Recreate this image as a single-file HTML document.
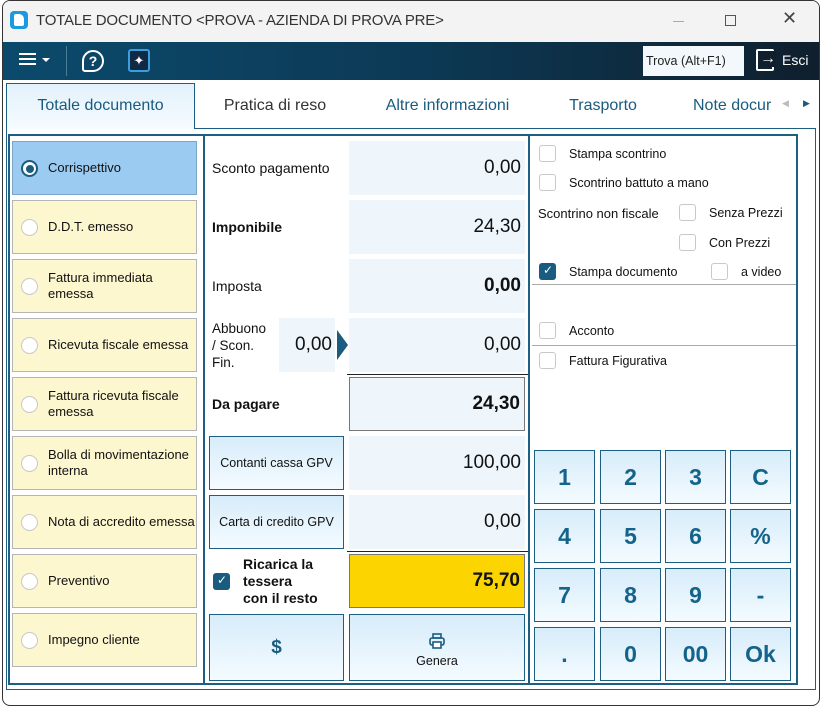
<!DOCTYPE html>
<html><head><meta charset="utf-8"><style>
*{box-sizing:border-box;margin:0;padding:0}
body{width:824px;height:708px;background:#fff;font-family:"Liberation Sans",Tahoma,sans-serif;position:relative;overflow:hidden;color:#111}
.a{position:absolute}
.win{left:2px;top:0;width:818px;height:706px;border:1px solid #333;border-radius:8px;background:#fff}
.title{left:3px;top:1px;width:816px;height:41px;background:#f3f3f3;border-radius:7px 7px 0 0}
.tb{left:3px;top:42px;width:816px;height:38px;background:linear-gradient(90deg,#0b4a6c 0%,#0c3a56 50%,#0f1f2d 100%)}
.tab{top:84px;height:44px;font-size:16px;line-height:44px;color:#1a5b80;text-align:center}
.frame{border:1px solid #1d5f82}
.li{left:12px;width:185px;height:54px;background:#fdf7cf;border:1px solid #b5b5b5;font-size:13px;color:#111}
.li .r{position:absolute;left:8px;top:18px;width:17px;height:17px;border-radius:50%;border:1.5px solid #c8c8c8;background:#fff}
.li .t{position:absolute;left:35px;top:0;height:52px;display:flex;align-items:center;line-height:16px}
.lab{left:212px;width:130px;height:54px;display:flex;align-items:center;font-size:14px}
.val{left:349px;width:176px;height:54px;background:#eef6fc;font-size:19px;text-align:right;padding-right:4px;line-height:54px}
.btn{border:1px solid #1d5f82;background:linear-gradient(#d7ecfa,#f4fbff);color:#111;display:flex;align-items:center;justify-content:center}
.k{width:61px;height:54px;font-size:23px;font-weight:bold;color:#13638a}
.cb{width:17px;height:17px;border:1.5px solid #c9c9c9;border-radius:3px;background:#fff}
.cbk{width:17px;height:17px;border-radius:3px;background:#1a5b80}
.ct{font-size:12.5px;color:#111}
</style></head><body>
<div class="a win"></div>
<div class="a title"></div>
<div class="a" style="left:10px;top:11px;width:18px;height:18px;background:#1a9ae0;border-radius:4px"></div>
<div class="a" style="left:14px;top:14px;width:10px;height:12px;background:#fff;border-radius:2px 5px 2px 2px"></div>
<div class="a" style="left:36px;top:12px;font-size:15px;color:#333;letter-spacing:-0.2px">TOTALE DOCUMENTO &lt;PROVA - AZIENDA DI PROVA PRE&gt;</div>
<div class="a" style="left:673px;top:21px;width:11px;height:1px;background:#aaa"></div>
<div class="a" style="left:725px;top:15px;width:11px;height:11px;border:1px solid #555"></div>
<div class="a" style="left:782px;top:8px;font-size:18px;color:#444">✕</div>
<div class="a tb"></div>
<div class="a" style="left:19px;top:53px;width:17px;height:2px;background:#fff;box-shadow:0 5px 0 #fff,0 10px 0 #fff"></div>
<div class="a" style="left:42px;top:58px;border:4px solid transparent;border-top:4px solid #fff"></div>
<div class="a" style="left:66px;top:46px;width:1px;height:30px;background:#4b7b95"></div>
<div class="a" style="left:82px;top:50px;width:22px;height:22px;border:2px solid #fff;border-radius:11px 11px 11px 3px;color:#fff;font-size:14px;text-align:center;line-height:18px;font-weight:bold">?</div>
<div class="a" style="left:128px;top:49px;width:22px;height:23px;border:2px solid #3a9ee0;background:#102a44;border-radius:3px;color:#fff;font-size:13px;text-align:center;line-height:19px">✦</div>
<div class="a" style="left:643px;top:46px;width:101px;height:30px;background:#f2f8fc;font-size:12.5px;line-height:30px;padding-left:3px;color:#222">Trova (Alt+F1)</div>
<div class="a" style="left:756px;top:49px;width:18px;height:22px;border:2px solid #fff;border-radius:2px"></div>
<div class="a" style="left:760px;top:51px;color:#fff;font-size:16px;background:#0f1f2d;line-height:16px">→</div>
<div class="a" style="left:782px;top:52px;color:#fff;font-size:14px">Esci</div>

<div class="a" style="left:6px;top:83px;width:189px;height:46px;background:linear-gradient(#e3f1fb,#f6fbff);border:1px solid #1d5f82;border-bottom:none;z-index:2"></div>
<div class="a tab" style="left:6px;width:189px;z-index:3">Totale documento</div>
<div class="a tab" style="left:200px;width:150px;color:#333">Pratica di reso</div>
<div class="a tab" style="left:370px;width:155px">Altre informazioni</div>
<div class="a tab" style="left:548px;width:110px">Trasporto</div>
<div class="a tab" style="left:693px;width:90px;text-align:left">Note docur</div>
<div class="a" style="left:782px;top:98px;font-size:9px;color:#bbb">◀</div>
<div class="a" style="left:803px;top:98px;font-size:9px;color:#1a5b80">▶</div>

<div class="a" style="left:6px;top:128px;width:810px;height:562px;border:1px solid #1d5f82"></div>
<div class="a frame" style="left:8px;top:134px;width:790px;height:551px;border-width:2px"></div>
<div class="a" style="left:203px;top:134px;width:2px;height:551px;background:#1d5f82"></div>
<div class="a" style="left:528px;top:134px;width:2px;height:551px;background:#1d5f82"></div>

<div class="a li" style="top:141px;background:#9ccbf2;border-color:#7aa4c8"><div class="r" style="border:2px solid #1a5b80"><div style="position:absolute;left:3px;top:3px;width:8px;height:8px;border-radius:50%;background:#1a5b80"></div></div><div class="t">Corrispettivo</div></div>
<div class="a li" style="top:200px"><div class="r"></div><div class="t">D.D.T. emesso</div></div>
<div class="a li" style="top:259px"><div class="r"></div><div class="t">Fattura immediata<br>emessa</div></div>
<div class="a li" style="top:318px"><div class="r"></div><div class="t">Ricevuta fiscale emessa</div></div>
<div class="a li" style="top:377px"><div class="r"></div><div class="t">Fattura ricevuta fiscale<br>emessa</div></div>
<div class="a li" style="top:436px"><div class="r"></div><div class="t">Bolla di movimentazione<br>interna</div></div>
<div class="a li" style="top:495px"><div class="r"></div><div class="t">Nota di accredito emessa</div></div>
<div class="a li" style="top:554px"><div class="r"></div><div class="t">Preventivo</div></div>
<div class="a li" style="top:613px"><div class="r"></div><div class="t">Impegno cliente</div></div>

<div class="a lab" style="top:141px">Sconto pagamento</div>
<div class="a val" style="top:141px">0,00</div>
<div class="a lab" style="top:200px;font-weight:bold">Imponibile</div>
<div class="a val" style="top:200px">24,30</div>
<div class="a lab" style="top:259px">Imposta</div>
<div class="a val" style="top:259px;font-weight:bold">0,00</div>
<div class="a lab" style="top:318px;width:60px;font-size:13.5px;line-height:17px">Abbuono / Scon. Fin.</div>
<div class="a" style="left:279px;top:318px;width:56px;height:54px;background:#eef6fc;font-size:19px;line-height:54px;text-align:right;padding-right:3px">0,00</div>
<div class="a" style="left:337px;top:330px;width:0;height:0;border-top:15px solid transparent;border-bottom:15px solid transparent;border-left:11px solid #1a5b80"></div>
<div class="a val" style="top:318px">0,00</div>
<div class="a" style="left:347px;top:374px;width:181px;height:1px;background:#222"></div>
<div class="a lab" style="top:377px;font-weight:bold">Da pagare</div>
<div class="a val" style="top:377px;border:1px solid #777;font-weight:bold;line-height:52px">24,30</div>
<div class="a btn" style="left:209px;top:436px;width:135px;height:54px;font-size:12.5px">Contanti cassa GPV</div>
<div class="a val" style="top:436px">100,00</div>
<div class="a btn" style="left:209px;top:495px;width:135px;height:54px;font-size:12.5px">Carta di credito GPV</div>
<div class="a val" style="top:495px">0,00</div>
<div class="a" style="left:347px;top:551px;width:181px;height:1px;background:#222"></div>
<div class="a cbk" style="left:213px;top:573px"></div>
<div class="a" style="left:217px;top:573px;color:#fff;font-size:12px">✓</div>
<div class="a" style="left:243px;top:556px;font-size:14px;font-weight:bold;line-height:17px">Ricarica la<br>tessera<br>con il resto</div>
<div class="a val" style="top:554px;background:#fcd400;border:1px solid #777;font-weight:bold;line-height:52px">75,70</div>
<div class="a btn" style="left:209px;top:614px;width:135px;height:67px;font-size:19px;font-weight:bold;color:#1a5b80">$</div>
<div class="a btn" style="left:349px;top:614px;width:176px;height:67px;font-size:12.5px;flex-direction:column"><svg width="18" height="18" viewBox="0 0 18 18" style="margin-top:4px"><rect x="5" y="2" width="8" height="4" fill="none" stroke="#1a5b80" stroke-width="1.6"/><rect x="2" y="6" width="14" height="7" rx="2" fill="none" stroke="#1a5b80" stroke-width="1.6"/><rect x="5" y="10" width="8" height="6" fill="#fff" stroke="#1a5b80" stroke-width="1.6"/></svg><div style="margin-top:4px">Genera</div></div>

<div class="a cb" style="left:539px;top:145px"></div><div class="a ct" style="left:569px;top:147px">Stampa scontrino</div>
<div class="a cb" style="left:539px;top:174px"></div><div class="a ct" style="left:569px;top:176px">Scontrino battuto a mano</div>
<div class="a ct" style="left:538px;top:206px;font-size:13px">Scontrino non fiscale</div>
<div class="a cb" style="left:679px;top:204px"></div><div class="a ct" style="left:709px;top:206px">Senza Prezzi</div>
<div class="a cb" style="left:679px;top:234px"></div><div class="a ct" style="left:709px;top:236px">Con Prezzi</div>
<div class="a cbk" style="left:539px;top:263px"></div><div class="a" style="left:543px;top:263px;color:#fff;font-size:12px">✓</div>
<div class="a ct" style="left:569px;top:265px">Stampa documento</div>
<div class="a cb" style="left:711px;top:263px"></div><div class="a ct" style="left:741px;top:265px">a video</div>
<div class="a" style="left:532px;top:284px;width:264px;height:1px;background:#aaa"></div>
<div class="a cb" style="left:539px;top:322px"></div><div class="a ct" style="left:569px;top:324px">Acconto</div>
<div class="a" style="left:532px;top:345px;width:264px;height:1px;background:#aaa"></div>
<div class="a cb" style="left:539px;top:352px"></div><div class="a ct" style="left:569px;top:354px">Fattura Figurativa</div>

<div class="a btn k" style="left:534px;top:450px">1</div>
<div class="a btn k" style="left:600px;top:450px">2</div>
<div class="a btn k" style="left:665px;top:450px">3</div>
<div class="a btn k" style="left:730px;top:450px">C</div>
<div class="a btn k" style="left:534px;top:509px">4</div>
<div class="a btn k" style="left:600px;top:509px">5</div>
<div class="a btn k" style="left:665px;top:509px">6</div>
<div class="a btn k" style="left:730px;top:509px">%</div>
<div class="a btn k" style="left:534px;top:568px">7</div>
<div class="a btn k" style="left:600px;top:568px">8</div>
<div class="a btn k" style="left:665px;top:568px">9</div>
<div class="a btn k" style="left:730px;top:568px">-</div>
<div class="a btn k" style="left:534px;top:627px">.</div>
<div class="a btn k" style="left:600px;top:627px">0</div>
<div class="a btn k" style="left:665px;top:627px">00</div>
<div class="a btn k" style="left:730px;top:627px">Ok</div>
</body></html>
